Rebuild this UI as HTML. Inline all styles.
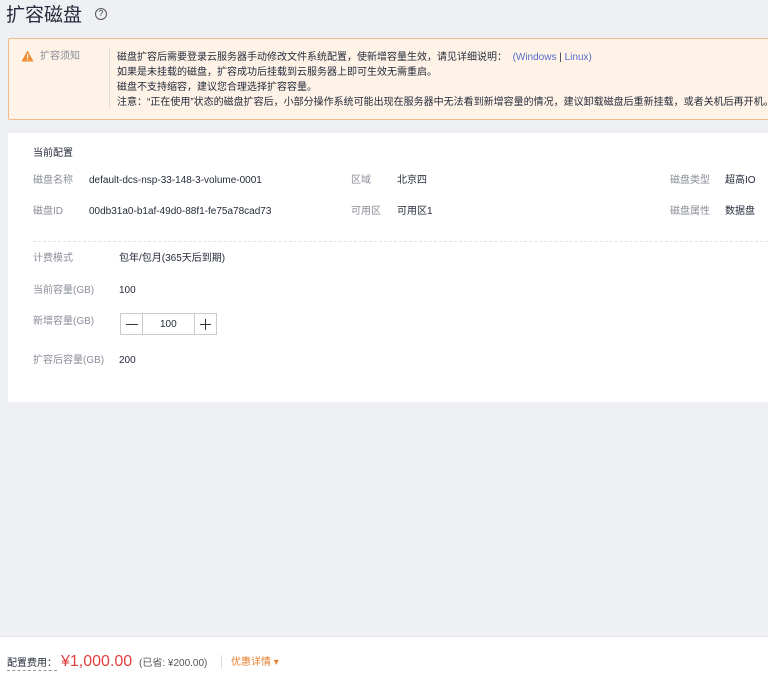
<!DOCTYPE html>
<html><head><meta charset="utf-8"><style>
*{margin:0;padding:0;box-sizing:border-box}
body{width:768px;height:673px;background:#eef0f4;font-family:"Liberation Sans","Noto Sans CJK SC",sans-serif;font-size:10px;color:#252b3a;position:relative;overflow:hidden}
.a{position:absolute;white-space:nowrap;line-height:14px}
.g{color:#8a8e99}
</style></head><body>
<div class="a" style="left:6px;top:3px;font-size:19px;line-height:26px;color:#252b3a">扩容磁盘</div>
<div class="a" style="left:95px;top:8px;width:12px;height:12px;border:1px solid #555;border-radius:50%;font-size:8px;text-align:center;line-height:10px">?</div>
<div class="a" style="left:8px;top:38px;width:770px;height:82px;background:#fff3e8;border:1px solid #f3b98a;border-radius:2px"></div>
<svg class="a" style="left:21px;top:50px" width="13" height="12" viewBox="0 0 13 12"><path d="M6.5 0.5L12.5 11.5H0.5Z" fill="#f08c33"/><rect x="6" y="4" width="1.2" height="4" fill="#fff"/><rect x="6" y="9" width="1.2" height="1.2" fill="#fff"/></svg>
<div class="a g" style="left:40px;top:50px">扩容须知</div>
<div class="a" style="left:109px;top:48px;width:1px;height:60px;background:#ddd"></div>
<div class="a" style="left:117px;top:50px;line-height:15px">磁盘扩容后需要登录云服务器手动修改文件系统配置，使新增容量生效，请见详细说明：&nbsp;&nbsp;<span style="color:#526ecc">(Windows</span> | <span style="color:#526ecc">Linux)</span><br>如果是未挂载的磁盘，扩容成功后挂载到云服务器上即可生效无需重启。<br>磁盘不支持缩容，建议您合理选择扩容容量。<br>注意：“正在使用”状态的磁盘扩容后，小部分操作系统可能出现在服务器中无法看到新增容量的情况，建议卸载磁盘后重新挂载，或者关机后再开机。</div>
<div class="a" style="left:8px;top:133px;width:770px;height:269px;background:#fff"></div>
<div class="a" style="left:33px;top:147px">当前配置</div>
<div class="a g" style="left:33px;top:174px">磁盘名称</div><div class="a" style="left:89px;top:174px">default-dcs-nsp-33-148-3-volume-0001</div>
<div class="a g" style="left:351px;top:174px">区域</div><div class="a" style="left:397px;top:174px">北京四</div>
<div class="a g" style="left:670px;top:174px">磁盘类型</div><div class="a" style="left:725px;top:174px">超高IO</div>
<div class="a g" style="left:33px;top:205px">磁盘ID</div><div class="a" style="left:89px;top:205px">00db31a0-b1af-49d0-88f1-fe75a78cad73</div>
<div class="a g" style="left:351px;top:205px">可用区</div><div class="a" style="left:397px;top:205px">可用区1</div>
<div class="a g" style="left:670px;top:205px">磁盘属性</div><div class="a" style="left:725px;top:205px">数据盘</div>
<div class="a" style="left:33px;top:241px;width:740px;border-top:1px dashed #e3e3e3"></div>
<div class="a g" style="left:33px;top:252px">计费模式</div><div class="a" style="left:119px;top:252px">包年/包月(365天后到期)</div>
<div class="a g" style="left:33px;top:284px">当前容量(GB)</div><div class="a" style="left:119px;top:284px">100</div>
<div class="a g" style="left:33px;top:315px">新增容量(GB)</div>
<div class="a" style="left:120px;top:313px;width:97px;height:22px;border:1px solid #c8cbd0;background:#fff"></div>
<div class="a" style="left:142px;top:314px;width:1px;height:20px;background:#c8cbd0"></div>
<div class="a" style="left:194px;top:314px;width:1px;height:20px;background:#c8cbd0"></div>
<div class="a" style="left:126px;top:324px;width:12px;height:1px;background:#333"></div>
<div class="a" style="left:200px;top:324px;width:11px;height:1px;background:#333"></div>
<div class="a" style="left:205px;top:319px;width:1px;height:11px;background:#333"></div>
<div class="a" style="left:160px;top:318px">100</div>
<div class="a g" style="left:33px;top:354px">扩容后容量(GB)</div><div class="a" style="left:119px;top:354px">200</div>
<div class="a" style="left:0;top:636px;width:768px;height:37px;background:#fff;border-top:1px solid #e5e5e5"></div>
<div class="a" style="left:7px;top:657px;border-bottom:1px dashed #999;line-height:13px">配置费用：</div>
<div class="a" style="left:61px;top:652px;font-size:16px;line-height:20px;color:#e0403f">¥1,000.00</div>
<div class="a" style="left:139px;top:657px;color:#555">(已省: ¥200.00)</div>
<div class="a" style="left:221px;top:655px;width:1px;height:14px;background:#ddd"></div>
<div class="a" style="left:231px;top:656px;color:#e87f2c">优惠详情 ▾</div>
</body></html>
